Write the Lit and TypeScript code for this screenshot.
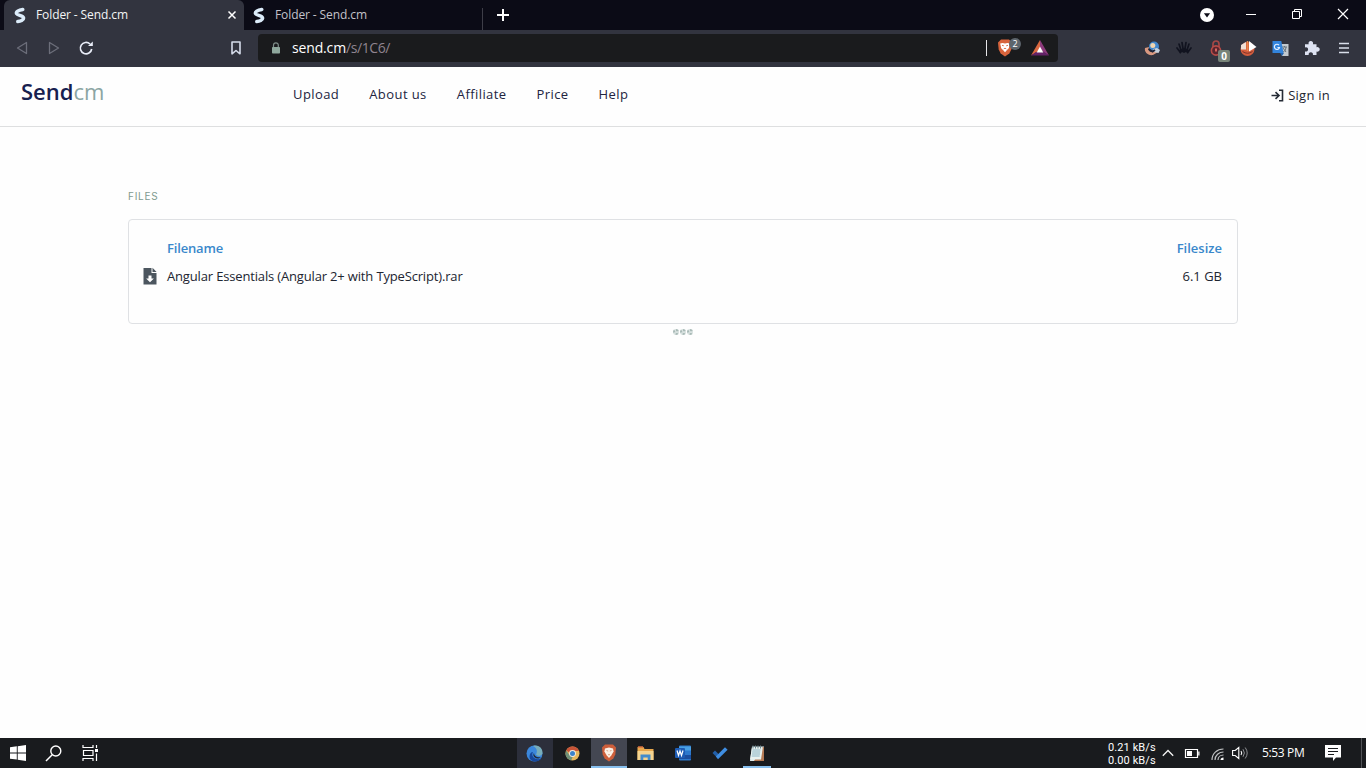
import { LitElement, html, css, svg } from 'lit';
import type { TemplateResult } from 'lit';
import { customElement, property } from 'lit/decorators.js';
import { classMap } from 'lit/directives/class-map.js';

interface Glyph {
  w: number;
  h: number;
  body: TemplateResult;
}

const glyphs: Record<string, Glyph> = {
  send: {
    w: 12,
    h: 17,
    body: svg`<path d="M8.800 2.400 C4.500 3 1.700 5 2.600 6.800 C3.500 8.500 9.500 8.500 9.600 11 C9.700 13 6.500 14.300 3.800 14.500" fill="none" stroke="#dcecfa" stroke-width="3.500" stroke-linecap="round"/>`,
  },
  cross: {
    w: 8,
    h: 8,
    body: svg`<path d="M.5.5l7 7M7.500.5l-7 7" stroke="#fff" stroke-width="1.500"/>`,
  },
  plus: {
    w: 12,
    h: 12,
    body: svg`<path d="M6 0v12M0 6h12" stroke="#fff" stroke-width="2"/>`,
  },
  dropdown: {
    w: 14,
    h: 14,
    body: svg`<circle cx="7" cy="7" r="7" fill="#fff"/><path d="M3.900 5.200h6.200L7 9.500z" fill="#0b0b16"/>`,
  },
  minimize: {
    w: 10,
    h: 10,
    body: svg`<path d="M0 5.500h10" stroke="#fff"/>`,
  },
  restore: {
    w: 10,
    h: 10,
    body: svg`<path d="M.5 2.500h7v7h-7zM2.500 2.500v-2h7v7h-2" fill="none" stroke="#fff"/>`,
  },
  close: {
    w: 10,
    h: 10,
    body: svg`<path d="M0 0l10 10M10 0L0 10" stroke="#fff" stroke-width="1.200"/>`,
  },
  back: {
    w: 12,
    h: 14,
    body: svg`<path d="M10.500 1.500v11L1.500 7z" fill="none" stroke="#6c6e7a" stroke-width="1.300" stroke-linejoin="round"/>`,
  },
  forward: {
    w: 12,
    h: 14,
    body: svg`<path d="M1.500 1.500v11l9-5.500z" fill="none" stroke="#6c6e7a" stroke-width="1.300" stroke-linejoin="round"/>`,
  },
  reload: {
    w: 14,
    h: 14,
    body: svg`<path d="M11 3A5.700 5.700 0 1 0 12.700 8" fill="none" stroke="#e9edf8" stroke-width="1.700"/><path d="M9 5h4.800V.6z" fill="#e9edf8"/>`,
  },
  bookmark: {
    w: 10,
    h: 14,
    body: svg`<path d="M1 1h8v11.800L5 9.500l-4 3.300z" fill="none" stroke="#d5dbea" stroke-width="1.600" stroke-linejoin="round"/>`,
  },
  lock: {
    w: 10,
    h: 12,
    body: svg`<path d="M2.500 5.500V3.200a2.400 2.400 0 0 1 4.800 0v2.300" fill="none" stroke="#7e8c88" stroke-width="1.200"/><rect x="1" y="5" width="8" height="6.500" rx=".8" fill="#8fa89d"/>`,
  },
  brave: {
    w: 16,
    h: 18,
    body: svg`<path d="M4 .5h8l3 3-.7 7-2 4L8 17.500l-4.300-3-2-4L1 3.500z" fill="#d8643c"/><path d="M3.200 4.500L5.500 4 8 4.500l2.500-.5 2.300.5-1 4.700L10 11l-2 2.300L6 11 4.200 9.200z" fill="#fff"/><path d="M5 6.300l1.800.5M11 6.300l-1.800.5M6.800 9.800L8 9.200l1.200.6" stroke="#d8643c" stroke-width=".9" fill="none"/>`,
  },
  lion: {
    w: 16,
    h: 18,
    body: svg`<path d="M4 .5h8l3 3-.7 7-2 4L8 17.500l-4.300-3-2-4L1 3.500z" fill="#cd5f3b"/><path d="M4 4.500L8 3.600l4 .9.600 3-2.300 4L8 14l-2.300-2.500-2.300-4z" fill="#fbf1e6"/><path d="M5.500 6.500l1.700.5M10.500 6.500L8.800 7M7 11l1-.6 1 .6" stroke="#d99a7c" stroke-width=".9" fill="none"/>`,
  },
  bat: {
    w: 18,
    h: 16,
    body: svg`<path d="M9 0v10l-4 2.500L0 15.500z" fill="#d96840"/><path d="M9 0l9 15.500-5-3L9 9z" fill="#8c3a7c"/><path d="M0 15.500l5-3.500h8l5 3.500z" fill="#632268"/><path d="M9 6.500l3.300 6H5.700z" fill="#fff"/>`,
  },
  globe: {
    w: 17,
    h: 15,
    body: svg`<circle cx="10" cy="5.500" r="5" fill="#4287cc"/><circle cx="8.800" cy="4.500" r="2.500" fill="#efd5b0"/><path d="M1 7c-1 4 3 8 8 7l5-3-3-2-3 2c-3 0-4-2-3-5z" fill="#d89880"/><path d="M9 8l4-1 3 2-1.500 3L10 11z" fill="#c5d0dc"/><path d="M4.500 8l4 2.500L11 9" stroke="#202638" stroke-width="2" fill="none"/>`,
  },
  claw: {
    w: 16,
    h: 14,
    body: svg`<path d="M6 1.500l1 6M10 1.500l-1 6M3 3l2 6M13 3l-2 6M1 7l3 4M15 7l-3 4" stroke="#11131f" stroke-width="1.700" stroke-linecap="round"/><path d="M3 9l5-2 5 2-1 4-2-2-2 1-2-1-2 2z" fill="#11131f"/>`,
  },
  padlock: {
    w: 12,
    h: 17,
    body: svg`<path d="M3 7V4a3 3 0 0 1 6 0v3" fill="none" stroke="#a54746" stroke-width="1.700"/><circle cx="6" cy="10.500" r="4.600" fill="#59262f" stroke="#b84b47" stroke-width="1.600"/><path d="M6 8.500v3" stroke="#d96560" stroke-width="2"/>`,
  },
  duck: {
    w: 17,
    h: 17,
    body: svg`<circle cx="7.500" cy="9" r="7" fill="#d35d3e"/><path d="M1 9.500V5l5-3v7.500z" fill="#f0dfd5"/><path d="M9 1l7.500 6L9 11.500z" fill="#fff"/><path d="M2.500 11.500q5 3.500 10 0" stroke="#7e3429" fill="none"/><path d="M7.500 1v10" stroke="#e98b4e" stroke-width="1.600"/>`,
  },
  translate: {
    w: 17,
    h: 17,
    body: svg`<path d="M8 4h8.500v12H10z" fill="#c2c9cf"/><path d="M10 7h5M12.500 6v1M14 7c0 3-2 5-3 5M11 8l3 4" stroke="#65727c" fill="none"/><path d="M.5 1h8.800l2.200 12H.5z" fill="#3384dc"/><path d="M8 13h4l-2 3z" fill="#2365b0"/><path d="M7 5.200A2.600 2.600 0 1 0 7.500 7.500H5.400" stroke="#e2efff" stroke-width="1.200" fill="none"/>`,
  },
  puzzle: {
    w: 16,
    h: 16,
    body: svg`<path d="M1 4.300h3.700a2.300 2.300 0 1 1 4.200 0h3.600v3a2.300 2.300 0 1 1 0 4.200V15H8.900a2.200 2.200 0 1 0-4.200 0H1v-3.600a2.200 2.200 0 1 0 0-4z" fill="#dde2f1"/>`,
  },
  menu: {
    w: 10,
    h: 14,
    body: svg`<path d="M0 2.500h10M0 7h10M0 11.500h10" stroke="#d9deea" stroke-width="1.500"/>`,
  },
  signin: {
    w: 13,
    h: 13,
    body: svg`<path d="M8 1.200h3.500v10.600H8M.5 6.500h7.500M4.500 3.200L8 6.500 4.500 9.800" fill="none" stroke="#252b35" stroke-width="1.600"/>`,
  },
  download: {
    w: 14,
    h: 18,
    body: svg`<path d="M.5 1h8v5h5v11.500H.5z" fill="#4c565f"/><path d="M9.500.8L13.600 5H9.500z" fill="#4c565f"/><path d="M5.500 8.500h3v3h2.400L7 15.300l-3.900-3.800h2.400z" fill="#fff"/>`,
  },
  windows: {
    w: 16,
    h: 16,
    body: svg`<path d="M0 2.300l6.800-1v6.200H0zM7.700 1.200L16 0v7.500H7.700zM0 8.400h6.800v6.200L0 13.700zM7.700 8.400H16V16l-8.300-1.200z" fill="#fff"/>`,
  },
  search: {
    w: 18,
    h: 17,
    body: svg`<circle cx="10.800" cy="6" r="5" fill="none" stroke="#fff" stroke-width="1.400"/><path d="M7.200 9.800L1 16" stroke="#fff" stroke-width="1.500"/>`,
  },
  taskview: {
    w: 17,
    h: 16,
    body: svg`<path d="M1 0v2.500h10V0M1 16v-2.500h10V16M1.500 5.500H11v5H1.500zM14.500 0v3M14.500 8.500V16" fill="none" stroke="#fff" stroke-width="1.200"/><path d="M13 4h3v3h-3z" fill="#fff"/>`,
  },
  edge: {
    w: 18,
    h: 17,
    body: svg`<circle cx="8.500" cy="8.500" r="8" fill="#3b87dc"/><path d="M7 1c6-2 10 3 9.500 7.500-1 3-5 3-6.500 1 2-3.500.5-7-3-8.500z" fill="#79adba"/><path d="M7 7c-2.500 4 2 9 8.500 6.500-4 5-12 3.500-12-2C3.500 9 5 7 7 7z" fill="#17479c"/><path d="M8 8c0 3 3 5 7 4l-2 1.500C9 14 6 11 8 8z" fill="#222a3c"/>`,
  },
  chrome: {
    w: 15,
    h: 15,
    body: svg`<circle cx="7.500" cy="7.500" r="7" fill="#e5b75e"/><path d="M1.200 4.500A7 7 0 0 1 14 5H7L5 7z" fill="#c85438"/><path d="M1.200 4.500a7 7 0 0 0 5 9.900L8 10 4.500 9z" fill="#6e8f78"/><circle cx="7.500" cy="7.500" r="3.400" fill="#f2eee6"/><circle cx="7.500" cy="7.500" r="2.500" fill="#3b82cb"/>`,
  },
  folder: {
    w: 18,
    h: 15,
    body: svg`<path d="M.5 1h6l1 2h9v11H.5z" fill="#e8a84d"/><path d="M1 1h5" stroke="#d96f41" stroke-width="1.500"/><path d="M.5 5h16v9H.5z" fill="#f5d48f"/><path d="M3.500 14V8.500h10V14h-2.800v-2.500H6.300V14z" fill="#438ccb"/>`,
  },
  word: {
    w: 17,
    h: 16,
    body: svg`<rect x="4" y=".5" width="12" height="15" rx="1" fill="#2c78cc"/><path d="M4 1.500h12v4H4z" fill="#48a0e4"/><path d="M4 10h12v4H4z" fill="#1b4e9e"/><rect y="3" width="10" height="10" rx="1" fill="#1e5cb4"/><path d="M2 5.500l1.500 5L5 6l1.500 4.500L8 5.500" stroke="#fff" stroke-width="1.200" fill="none"/>`,
  },
  todo: {
    w: 16,
    h: 14,
    body: svg`<path d="M.5 7L3 4.500 7 8.500l-2.500 2.600z" fill="#235fa8"/><path d="M3.800 10.500L13 1.200l2.600 2.600L6 13.200z" fill="#3f8ee2"/>`,
  },
  notepad: {
    w: 16,
    h: 17,
    body: svg`<path d="M3 1.500h12L13 16H1z" fill="#ddebed"/><path d="M13.500 2l1.500.3V16H5z" fill="#b47954"/><path d="M3 2.500h10.800L12 14.500H1z" fill="#e8f1f0"/><path d="M3.500 5h8M3.200 7h8M3 9h8M2.700 11h8" stroke="#8cb5c5"/><path d="M4 .5v3M6.500.5v3M9 .5v3M11.500.5v3" stroke="#6a858d"/>`,
  },
  chevron: {
    w: 12,
    h: 8,
    body: svg`<path d="M.8 6.800L6 1.500l5.200 5.300" fill="none" stroke="#f4f4f4" stroke-width="1.300"/>`,
  },
  battery: {
    w: 15,
    h: 9,
    body: svg`<path d="M.5.5h12v8H.5zM13.900 2.500v4" fill="none" stroke="#fff" stroke-width="1.200"/><path d="M2 2h5v5H2z" fill="#fff"/>`,
  },
  wifi: {
    w: 13,
    h: 13,
    body: svg`<path d="M1 12C1 5.500 6 1 12.500 1M4 12C4 7.500 8 4 12.500 4M7 12c0-3 2.500-5 5.500-5" fill="none" stroke="#bfc1c3" stroke-width="1.200"/><path d="M9.500 12c0-1.500 1-2.600 3-2.600V12z" fill="#fff"/>`,
  },
  volume: {
    w: 17,
    h: 14,
    body: svg`<path d="M.6 4.500h2.600l3.600-3v11l-3.600-3H.6zM9 5q1.500 2 0 4" fill="none" stroke="#fff" stroke-width="1.100"/><path d="M11 3.200q2.800 3.800 0 7.600M13.200 1.500q4 5.500 0 11" fill="none" stroke="#8d8f92"/>`,
  },
  notice: {
    w: 16,
    h: 16,
    body: svg`<path d="M0 0h16v12.500h-5L8 16v-3.500H0z" fill="#fff"/><path d="M3 3.500h10M3 6.500h10M3 9.500h6" stroke="#191b1e" stroke-width="1.100"/>`,
  },
};

@customElement('ui-icon')
export class UiIcon extends LitElement {
  @property() name = '';

  static styles = css`
    :host {
      display: inline-flex;
      flex: none;
    }

    svg {
      display: block;
      overflow: visible;
    }
  `;

  render() {
    const { w, h, body } = glyphs[this.name];
    return html`<svg width=${w} height=${h} viewBox="0 0 ${w} ${h}">${body}</svg>`;
  }
}

@customElement('browser-chrome')
export class BrowserChrome extends LitElement {
  static styles = css`
    :host {
      display: block;
      font: 12px/16px 'Open Sans', sans-serif;
      color: #fff;
    }

    .tabs {
      display: flex;
      height: 30px;
      padding-left: 4px;
      background: #0b0b16;
    }

    .tab {
      box-sizing: border-box;
      display: flex;
      align-items: center;
      width: 239px;
      padding: 0 8px 0 9px;
      color: #c3c2c9;
      letter-spacing: -0.1px;
    }

    .tab.active {
      width: 240px;
      padding-left: 10px;
      background: #32343f;
      border-radius: 6px 6px 0 0;
      color: #f4f4f6;
    }

    .title {
      flex: 1;
      padding-left: 10px;
    }

    .divider {
      width: 1px;
      height: 22px;
      margin-top: 8px;
      margin-left: -1px;
      background: #3e3e48;
    }

    .new-tab {
      display: flex;
      align-items: center;
      padding-left: 14px;
    }

    .window {
      display: flex;
      margin-left: auto;
    }

    .window ui-icon {
      width: 46px;
      align-items: center;
      justify-content: center;
      margin-top: -2px;
    }

    .window .guest {
      width: 42px;
      margin-top: 0;
    }

    .toolbar {
      box-sizing: border-box;
      display: flex;
      align-items: center;
      height: 37px;
      padding: 0 0 1px 6px;
      background: #32343f;
    }

    .cell {
      position: relative;
      display: flex;
      align-items: center;
      justify-content: center;
      width: 32px;
      height: 28px;
    }

    .mark {
      margin-left: 118px;
    }

    .address {
      box-sizing: border-box;
      display: flex;
      align-items: center;
      width: 800px;
      height: 28px;
      margin: 0 78px 0 6px;
      padding: 0 9px 0 13px;
      border-radius: 4px;
      background: #1a1b1d;
    }

    .url {
      flex: 1;
      padding-left: 11px;
      font-size: 14px;
      letter-spacing: -0.15px;
    }

    .path {
      color: #8f848f;
      letter-spacing: -0.4px;
    }

    .rule {
      width: 1px;
      height: 16px;
      margin-right: 10px;
      background: #e5e5e8;
    }

    .shield {
      position: relative;
      display: flex;
      margin-right: 18px;
    }

    .count {
      position: absolute;
      left: 12px;
      top: -1px;
      width: 12px;
      height: 12px;
      border-radius: 6px;
      background: #5d656c;
      font-size: 9px;
      line-height: 12px;
      text-align: center;
    }

    .flag {
      position: absolute;
      left: 18px;
      top: 16px;
      width: 12px;
      height: 12px;
      border-radius: 2px;
      background: #788479;
      font-weight: 700;
      font-size: 10px;
      line-height: 12px;
      text-align: center;
    }
  `;

  render() {
    const extensions = ['globe', 'claw', 'padlock', 'duck', 'translate', 'puzzle', 'menu'];
    return html`
      <div class="tabs">
        <div class="tab active">
          <ui-icon name="send"></ui-icon>
          <span class="title">Folder - Send.cm</span>
          <ui-icon name="cross"></ui-icon>
        </div>
        <div class="tab">
          <ui-icon name="send"></ui-icon>
          <span class="title">Folder - Send.cm</span>
        </div>
        <div class="divider"></div>
        <div class="new-tab"><ui-icon name="plus"></ui-icon></div>
        <div class="window">
          <ui-icon class="guest" name="dropdown"></ui-icon>
          <ui-icon name="minimize"></ui-icon>
          <ui-icon name="restore"></ui-icon>
          <ui-icon name="close"></ui-icon>
        </div>
      </div>
      <div class="toolbar">
        <div class="cell"><ui-icon name="back"></ui-icon></div>
        <div class="cell"><ui-icon name="forward"></ui-icon></div>
        <div class="cell"><ui-icon name="reload"></ui-icon></div>
        <div class="cell mark"><ui-icon name="bookmark"></ui-icon></div>
        <div class="address">
          <ui-icon name="lock"></ui-icon>
          <span class="url">send.cm<span class="path">/s/1C6/</span></span>
          <span class="rule"></span>
          <span class="shield">
            <ui-icon name="brave"></ui-icon>
            <span class="count">2</span>
          </span>
          <ui-icon name="bat"></ui-icon>
        </div>
        ${extensions.map(
          (name) => html`
            <div class="cell">
              <ui-icon name=${name}></ui-icon>
              ${name === 'padlock' ? html`<span class="flag">0</span>` : null}
            </div>
          `
        )}
      </div>
    `;
  }
}

@customElement('folder-page')
export class FolderPage extends LitElement {
  static styles = css`
    :host {
      display: block;
      font: 13px/20px 'Open Sans', sans-serif;
      color: #212531;
      background: #fefefe;
    }

    header {
      box-sizing: border-box;
      display: flex;
      height: 60px;
      padding: 0 36px 0 21px;
      border-bottom: 1px solid #dedfe0;
    }

    .logo {
      width: 272px;
      padding-top: 8px;
      font-size: 22px;
      line-height: 32px;
      font-weight: 600;
      letter-spacing: 0;
      color: #17204f;
    }

    .logo span {
      font-weight: 400;
      color: #8ba5a3;
    }

    nav {
      display: flex;
      gap: 30px;
      padding-top: 17px;
      font-weight: 500;
      letter-spacing: 0.42px;
      color: #22243f;
    }

    .signin {
      display: flex;
      align-items: center;
      gap: 4px;
      height: 20px;
      margin: 18px 0 0 auto;
      letter-spacing: 0.25px;
    }

    main {
      padding: 60px 128px 0;
    }

    h2 {
      margin: 0 0 13px;
      font: 400 10px/19px 'Inter', sans-serif;
      letter-spacing: 0.75px;
      color: #7e9a8f;
    }

    .card {
      box-sizing: border-box;
      height: 105px;
      padding: 18px 15px 0 14px;
      border: 1px solid #dfe1e4;
      border-radius: 4px;
    }

    .row {
      display: grid;
      grid-template-columns: 24px 1fr auto;
      align-items: center;
      height: 20px;
      margin-bottom: 8px;
    }

    .head {
      font-weight: 600;
      color: #3988cb;
    }

    .name {
      letter-spacing: -0.16px;
    }

    .dots {
      display: flex;
      justify-content: center;
      gap: 1px;
      padding-top: 5px;
    }

    .dot {
      box-sizing: border-box;
      width: 6px;
      height: 6px;
      border: 2px dotted #a9bab7;
      border-radius: 50%;
      background: #d9e2e0;
    }
  `;

  render() {
    const links = ['Upload', 'About us', 'Affiliate', 'Price', 'Help'];
    return html`
      <header>
        <div class="logo">Send<span>cm</span></div>
        <nav>${links.map((link) => html`<span>${link}</span>`)}</nav>
        <div class="signin"><ui-icon name="signin"></ui-icon>Sign in</div>
      </header>
      <main>
        <h2>FILES</h2>
        <div class="card">
          <div class="row head">
            <span></span>
            <span class="name">Filename</span>
            <span>Filesize</span>
          </div>
          <div class="row">
            <ui-icon name="download"></ui-icon>
            <span class="name">Angular Essentials (Angular 2+ with TypeScript).rar</span>
            <span>6.1 GB</span>
          </div>
        </div>
        <div class="dots">
          <span class="dot"></span>
          <span class="dot"></span>
          <span class="dot"></span>
        </div>
      </main>
    `;
  }
}

@customElement('task-bar')
export class TaskBar extends LitElement {
  static styles = css`
    :host {
      display: grid;
      grid-template-columns: 517px 1fr auto;
      height: 30px;
      font: 12px/16px 'Open Sans', sans-serif;
      color: #fff;
      background: #191b1e;
    }

    .group {
      display: flex;
    }

    .apps {
      gap: 1px;
    }

    .item {
      box-sizing: border-box;
      display: flex;
      align-items: center;
      justify-content: center;
      width: 36px;
      height: 30px;
    }

    .hover {
      background: #2c2f3b;
    }

    .active {
      background: #444752;
    }

    .running {
      box-shadow: inset 0 -2px #87bfee;
    }

    .short {
      width: 28px;
      margin-left: 4px;
    }

    .tray {
      display: flex;
      align-items: center;
    }

    .speed {
      width: 54px;
      font-family: Roboto, sans-serif;
      font-size: 11px;
      line-height: 13px;
      letter-spacing: 0.1px;
      padding-top: 2px;
    }

    .clock {
      width: 63px;
      padding-left: 13px;
      letter-spacing: -0.35px;
    }

    .battery {
      margin-left: 11px;
    }

    .wifi {
      margin: 2px 8px 0 11px;
    }

    .edge {
      width: 1px;
      height: 30px;
      margin: 0 4px 0 20px;
      background: #505256;
    }
  `;

  render() {
    const apps = [
      { name: 'edge', hover: true },
      { name: 'chrome' },
      { name: 'lion', active: true, running: true },
      { name: 'folder' },
      { name: 'word' },
      { name: 'todo' },
      { name: 'notepad', running: true, short: true },
    ];
    return html`
      <div class="group">
        ${['windows', 'search', 'taskview'].map(
          (name) => html`<div class="item"><ui-icon name=${name}></ui-icon></div>`
        )}
      </div>
      <div class="group apps">
        ${apps.map(
          ({ name, ...state }) => html`
            <div class=${classMap({ item: true, ...state })}>
              <ui-icon name=${name}></ui-icon>
            </div>
          `
        )}
      </div>
      <div class="tray">
        <div class="speed">0.21 kB/s<br />0.00 kB/s</div>
        <ui-icon name="chevron"></ui-icon>
        <ui-icon class="battery" name="battery"></ui-icon>
        <ui-icon class="wifi" name="wifi"></ui-icon>
        <ui-icon name="volume"></ui-icon>
        <span class="clock">5:53 PM</span>
        <ui-icon name="notice"></ui-icon>
        <span class="edge"></span>
      </div>
    `;
  }
}

@customElement('app-root')
export class AppRoot extends LitElement {
  static styles = css`
    :host {
      display: grid;
      grid-template-rows: 67px 1fr 30px;
      width: 1366px;
      height: 768px;
      overflow: hidden;
    }
  `;

  render() {
    return html`
      <browser-chrome></browser-chrome>
      <folder-page></folder-page>
      <task-bar></task-bar>
    `;
  }
}
